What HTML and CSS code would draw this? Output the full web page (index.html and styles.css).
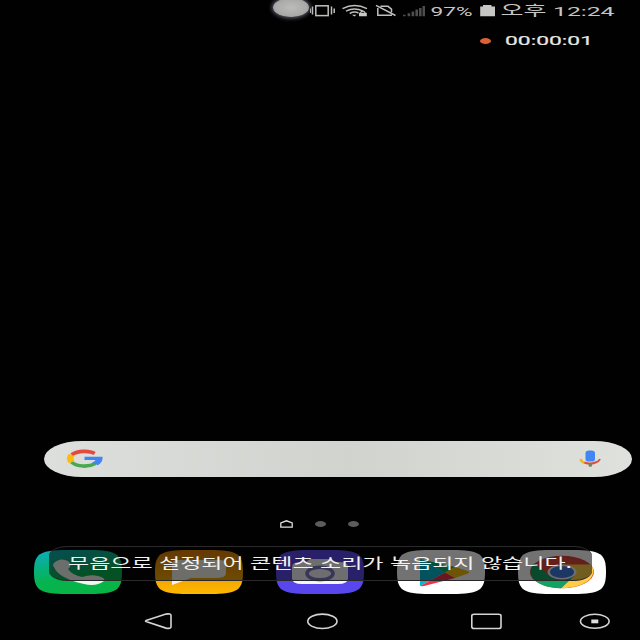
FILE: index.html
```
<!DOCTYPE html>
<html lang="ko">
<head>
<meta charset="utf-8">
<title>홈 화면</title>
<link rel="stylesheet" href="styles.css">
</head>
<body>
<main class="phone">
  <header class="status">
    <span class="touch"></span>
    <svg class="status-icons" width="118" height="24" viewBox="310 0 118 24">
      <g fill="none" stroke="#bfc0bd" stroke-width="1.500">
        <rect x="315.800" y="5.800" width="12.400" height="9.800"/>
        <path d="M312.500 6.500v8M331.500 6.500v8M334.200 8.500v4.500M310.300 8.500v4.500"/>
        <path d="M342.500 8.600Q354.500 2.500 367 8.600M346 11.200Q354.500 6.600 363 11.200M349.700 13.500Q354.500 11 358.500 13"/>
        <path d="M360.800 13.200v-1q2-2 4 0v1" stroke-width="1.200"/>
        <path d="M380.500 6.300h7.500l3.500 2.800v3.200M377.800 8v7.300h14.200M376 5.300l19.500 10.200"/>
      </g>
      <path d="M352 14.800h4.500l-2.200 1.700zM359 12.700h7.800v3.600H359z" fill="#c8c9c6"/>
      <path d="M403 14.700h2.600v1.500H403zM407.600 13.200h2.600v3h-2.600zM411.600 11.500h2.600v4.700h-2.600zM415.400 9.600h2.600v6.600h-2.600zM419 7.900h2.600v8.300H419zM422.500 6h2.500v10.200h-2.500z" fill="#4d4e4c"/>
    </svg>
    <svg class="status-text" width="190" height="24" viewBox="428 0 190 24">
      <text x="430.500" y="15.700" textLength="42" lengthAdjust="spacingAndGlyphs">97%</text>
      <path d="M483 6.500V5h8.500v1.500h3.500v9.700h-14.800V6.500z"/>
      <text class="ko" x="500.500" y="15.400" textLength="46" lengthAdjust="spacingAndGlyphs">오후</text>
      <text x="553" y="15.700" textLength="61.500" lengthAdjust="spacingAndGlyphs">12:24</text>
    </svg>
  </header>
  <div class="recording">
    <span class="rec-dot"></span>
    <svg width="90" height="20" viewBox="0 0 90 20"><text x="0" y="14.300" textLength="88" lengthAdjust="spacingAndGlyphs">00:00:01</text></svg>
  </div>
  <section class="search">
    <svg width="38" height="20" viewBox="0 0 38 20" fill="none">
      <path d="M29.700 4.600C24.800 1.400 12.600 1.400 6.600 5.800" stroke="#e24a3d" stroke-width="3.600"/>
      <path d="M6.300 13C12 18 23.500 18.300 30.500 14.500" stroke="#4aa853" stroke-width="3.600"/>
      <path d="M3.800 4.800L9.500 7.300Q7.500 9.500 9.500 11.900L3.800 14.300Q-.2 9.500 3.800 4.800z" fill="#fbbc12"/>
      <path d="M19.500 7.700H37.500C38 11 36.500 14 32.800 16.300L27 13.600Q29.800 12.500 30.500 11H19.500z" fill="#4285f0"/>
    </svg>
    <svg width="24" height="18" viewBox="0 0 24 18">
      <rect x="7.500" y=".6" width="9.500" height="11" rx="3.600" ry="2.600" fill="#4285f4"/>
      <path d="M2.300 9Q3.500 12 7 13" fill="none" stroke="#efb42a" stroke-width="2.400"/>
      <path d="M6.500 12.500Q12 14.700 17.500 12.500Q21 11.500 22 9" fill="none" stroke="#dc5040" stroke-width="2"/>
      <path d="M10.700 13.600h3.200v3h-3.200z" fill="#67875a"/>
    </svg>
  </section>
  <div class="pages">
    <svg width="13" height="8" viewBox="0 0 13 8"><path d="M.8 7.200V2.900L6.500.8l5.700 2.100v4.300z" fill="none" stroke="#dededb" stroke-width="1.300"/></svg>
    <span class="page-dot"></span>
    <span class="page-dot"></span>
  </div>
  <section class="dock">
    <svg class="app" viewBox="0 0 88 44">
      <defs><linearGradient id="phone" x2=".35" y2="1"><stop stop-color="#0cadc0"/><stop offset=".7" stop-color="#05b44e"/><stop offset="1" stop-color="#07b547"/></linearGradient>
      <linearGradient id="message" x2="0" y2="1"><stop stop-color="#df7e05"/><stop offset="1" stop-color="#ffb900"/></linearGradient></defs>
      <path d="M0 22C0 4 5 0 33 0H55C83 0 88 4 88 22S83 44 55 44H33C5 44 0 40 0 22" fill="url(#phone)"/>
      <path d="M20 13Q26 7 34 11Q39 15 34 19Q38 25 48 27Q57 24 64 26Q72 28 70 31Q62 37 50 34Q24 28 20 17Q18 15 20 13" fill="#f1f6f2"/>
    </svg>
    <svg class="app" viewBox="0 0 88 44">
      <path d="M0 22C0 4 5 0 33 0H55C83 0 88 4 88 22S83 44 55 44H33C5 44 0 40 0 22" fill="url(#message)"/>
      <path d="M24 10H64Q71 10 71 14V24Q70 28 61 28H36L17 35V14Q17 10 24 10" fill="#f8f3e9"/>
    </svg>
    <svg class="app" viewBox="0 0 88 44">
      <path d="M0 22C0 4 5 0 33 0H55C83 0 88 4 88 22S83 44 55 44H33C5 44 0 40 0 22" fill="#5946ed"/>
      <path d="M25 12H30L34 9H54L58 12H63Q72 12 72 17V28Q72 34 62 34H26Q16 34 16 28V17Q16 12 25 12" fill="#f6f5fb"/>
      <ellipse cx="44" cy="23.500" rx="13" ry="6.300" fill="none" stroke="#7975c4" stroke-width="3.500"/>
    </svg>
    <svg class="app" viewBox="0 0 88 44">
      <path d="M0 22C0 4 5 0 33 0H55C83 0 88 4 88 22S83 44 55 44H33C5 44 0 40 0 22" fill="#fff"/>
      <path d="M23 9L48 22.500L23 36z" fill="#00b9d2"/>
      <path d="M23 9Q26 9 29 10.500L58 17L48 22.500z" fill="#08b477"/>
      <path d="M58 17L71 21Q73 22.500 71 23.500L58 28L48 22.500z" fill="#f5bd08"/>
      <path d="M48 22.500L58 28L29 35.500Q26 36.500 23 36z" fill="#ee3048"/>
    </svg>
    <svg class="app" viewBox="0 0 88 44">
      <path d="M0 22C0 4 5 0 33 0H55C83 0 88 4 88 22S83 44 55 44H33C5 44 0 40 0 22" fill="#fff"/>
      <ellipse cx="44" cy="22" rx="32" ry="16.200" fill="#dc4437"/>
      <path d="M44 14.500H72.500C80 22 74 37.500 43 38.200L56 26z" fill="#ffcd42"/>
      <path d="M16.500 13.500C7 22 14 37.500 43 38.200L56 26L32 26z" fill="#11a361"/>
      <ellipse cx="44" cy="22" rx="14.500" ry="7.400" fill="#f4f4f4"/>
      <ellipse cx="44" cy="22" rx="12" ry="6" fill="#3d79dd"/>
    </svg>
    <div class="toast">
      <svg width="543" height="34" viewBox="49 547 543 34"><text x="68" y="568.300" textLength="504" lengthAdjust="spacingAndGlyphs">무음으로 설정되어 콘텐츠 소리가 녹음되지 않습니다.</text></svg>
    </div>
  </section>
  <nav class="nav">
    <svg width="30" height="18" viewBox="0 0 30 18"><path d="M2 8.600L22 2.100Q27 1.200 27 3.500V15Q27 17 22 16.100L2 9.600Q1 9.100 2 8.600z"/></svg>
    <svg width="32" height="18" viewBox="0 0 32 18"><ellipse cx="16.400" cy="9.300" rx="14.600" ry="7.200"/></svg>
    <svg width="32" height="18" viewBox="0 0 32 18"><rect x="1.800" y="2.200" width="29.200" height="14.300" rx="2.500" ry="1.500"/></svg>
    <svg width="32" height="18" viewBox="0 0 32 18"><ellipse cx="15.800" cy="9.300" rx="14.300" ry="7"/><path class="solid" d="M12.300 7.500h7v3.800h-7z"/></svg>
  </nav>
</main>
</body>
</html>
```
FILE: styles.css
```
* { box-sizing: border-box; }
body { margin: 0; background: #000; }
svg { display: block; flex: none; }
text { font-family: Roboto, "Noto Sans CJK KR", sans-serif; }
.phone {
  position: relative;
  display: flex;
  flex-direction: column;
  width: 640px;
  height: 640px;
  overflow: hidden;
  background: #010101;
}
.status {
  display: flex;
  height: 24px;
  padding-left: 310px;
}
.touch {
  position: absolute;
  left: 273px;
  top: -2px;
  width: 36px;
  height: 19px;
  border-radius: 50%;
  background: radial-gradient(#bcbcba, #aaaaa8 60%, #808180);
  box-shadow: 0 0 4px 1px #626276;
}
.status-text { fill: #c6c7c4; font-size: 13.5px; }
.status-text .ko { font-family: "Noto Sans CJK KR", sans-serif; font-size: 13.5px; }
.recording {
  display: flex;
  align-items: center;
  height: 20px;
  margin-top: 7px;
  padding-left: 480px;
  gap: 14px;
  fill: #e7e7e5;
  stroke: #e7e7e5;
  stroke-width: .2;
  font-size: 12.5px;
}
.rec-dot {
  width: 11px;
  height: 6px;
  border-radius: 50%;
  background: #de6038;
}
.search {
  display: flex;
  align-items: center;
  justify-content: space-between;
  width: 588px;
  height: 36px;
  margin: 390px 0 0 44px;
  padding: 0 30px 0 21px;
  border-radius: 38px / 18px;
  background: linear-gradient(90deg, #dddfdc, #d1d3cf 52%, #dee1dc);
}
.pages {
  display: flex;
  align-items: center;
  height: 10px;
  margin: 42px 0 0 280px;
  gap: 22px;
}
.page-dot {
  width: 11px;
  height: 6px;
  border-radius: 50%;
  background: #5b5c5b;
}
.dock {
  position: relative;
  display: flex;
  gap: 33px;
  height: 44px;
  margin: 21px 0 0 34px;
}
.app { width: 88px; height: 44px; }
.toast {
  position: absolute;
  left: 15px;
  top: -4px;
  width: 543px;
  height: 35px;
  border: solid #292929;
  border-width: 1px 0;
  border-radius: 18px / 10px;
  background: rgba(4, 4, 4, .56);
  fill: #f2f2f0;
}
.toast text { font-family: "Noto Sans CJK KR", sans-serif; font-size: 13.8px; }
.nav {
  display: flex;
  margin: 18px 0 0 144px;
  fill: none;
  stroke: #d4d4d2;
  stroke-width: 1.6;
}
.nav svg:nth-child(2) { margin-left: 132px; }
.nav svg:nth-child(3) { margin-left: 132px; }
.nav svg:nth-child(4) { margin-left: 77px; }
.nav .solid { fill: #e0e0de; stroke: none; }
```
